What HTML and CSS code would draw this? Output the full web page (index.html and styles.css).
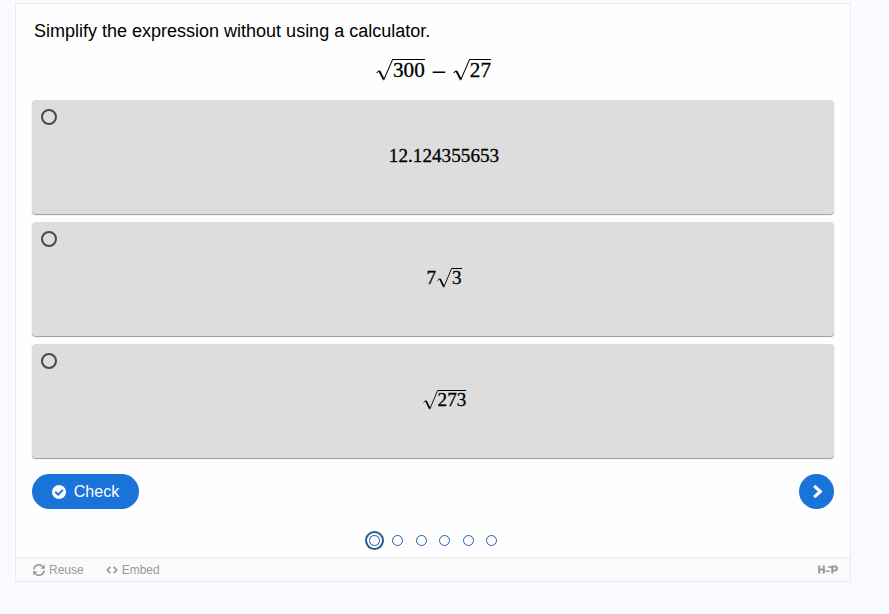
FILE: index.html
```html
<!DOCTYPE html>
<html lang="en">

<head>
    <meta charset="UTF-8">
    <meta name="viewport" content="width=device-width, initial-scale=1.0">
    <title>Simplify the expression</title>
    <link rel="stylesheet" href="styles.css">
</head>

<body>
    <div class="quiz">
        <div class="question">
            <p class="intro">Simplify the expression without using a calculator.</p>
            <div class="math expression">
                <span class="sqrt"><svg viewBox="0 0 17 21" preserveAspectRatio="none"><path class="thin" d="M.6 13.3 3.3 11M7.6 20.3 16.6.5H17"/><path class="thick" d="M3.4 11.4 7.6 19.4"/></svg><span class="radicand">300</span></span>
                <span class="minus">−</span>
                <span class="sqrt"><svg viewBox="0 0 17 21" preserveAspectRatio="none"><path class="thin" d="M.6 13.3 3.3 11M7.6 20.3 16.6.5H17"/><path class="thick" d="M3.4 11.4 7.6 19.4"/></svg><span class="radicand">27</span></span>
            </div>
            <ul class="answers">
                <li class="answer">
                    <span class="radio"></span>
                    <div class="math">12.124355653</div>
                </li>
                <li class="answer">
                    <span class="radio"></span>
                    <div class="math">7<span class="sqrt"><svg viewBox="0 0 17 21" preserveAspectRatio="none"><path class="thin" d="M.6 13.3 3.3 11M7.6 20.3 16.6.5H17"/><path class="thick" d="M3.4 11.4 7.6 19.4"/></svg><span class="radicand">3</span></span></div>
                </li>
                <li class="answer">
                    <span class="radio"></span>
                    <div class="math"><span class="sqrt"><svg viewBox="0 0 17 21" preserveAspectRatio="none"><path class="thin" d="M.6 13.3 3.3 11M7.6 20.3 16.6.5H17"/><path class="thick" d="M3.4 11.4 7.6 19.4"/></svg><span class="radicand">273</span></span></div>
                </li>
            </ul>
            <div class="buttons">
                <button class="check">
                    <svg width="14" height="14" viewBox="0 0 14 14"><circle cx="7" cy="7" r="7" fill="#fff"/><path d="M3.2 6.7 6.2 9.6 10.9 4.9" fill="none" stroke="#1a73d9" stroke-width="2"/></svg>
                    Check
                </button>
                <button class="next" aria-label="Next">
                    <svg width="12" height="16" viewBox="0 0 12 16"><path d="M2.2 1.8 8.3 7.5 2.2 13.2" fill="none" stroke="#fff" stroke-width="3.2"/></svg>
                </button>
            </div>
        </div>
        <div class="dots">
            <span class="dot current"></span>
            <span class="dot"></span>
            <span class="dot"></span>
            <span class="dot"></span>
            <span class="dot"></span>
            <span class="dot"></span>
        </div>
        <div class="actions">
            <span class="action reuse">
                <svg width="12" height="12" viewBox="0 0 12 12"><path d="M.9 5.3A5 5 0 0 1 9.7 2.6M11.1 6.7A5 5 0 0 1 2.3 9.4" fill="none" stroke="#999" stroke-width="1.6"/><path d="M11.8.6V4.8H7.6ZM.2 11.4V7.2H4.4Z" fill="#999"/></svg>
                Reuse
            </span>
            <span class="action embed">
                <svg width="12" height="8" viewBox="0 0 12 8"><path d="M4.4.9 1.2 4 4.4 7.1M7.6.9 10.8 4 7.6 7.1" fill="none" stroke="#999" stroke-width="1.6"/></svg>
                Embed
            </span>
            <svg class="logo" width="20" height="9" viewBox="0 0 20 9"><path d="M1.2.5V8.5M5.8.5V8.5M1.2 4.5H6M14.3 8.5V1.5H17A1.9 1.9 0 0 1 17 5.4H14.5" fill="none" stroke="#999" stroke-width="2"/><path d="M10 2H14M7.5 6.3H11.5" fill="none" stroke="#999" stroke-width="1.4"/></svg>
        </div>
    </div>
</body>

</html>
```
FILE: styles.css
```css
* {
    box-sizing: border-box;
}

body {
    margin: 0;
    padding: 3px 0 0 15px;
    background: #fafaff;
    font-family: "Liberation Sans", Arial, sans-serif;
}

.quiz {
    width: 836px;
    height: 579px;
    border: 1px solid #ececf0;
    background: #fefefe;
}

.question {
    height: 520px;
    padding: 16px 16px 0;
}

.intro {
    margin: 0;
    padding-left: 2px;
    font-size: 18px;
    line-height: 22px;
    color: #000;
}

.math {
    display: flex;
    align-items: center;
    justify-content: center;
    font-family: "Liberation Serif", serif;
    font-size: 19.2px;
    line-height: 20px;
    color: #000;
    -webkit-text-stroke: 0.3px #000;
}

.sqrt {
    display: flex;
    align-items: flex-start;
}

.sqrt svg {
    width: 15px;
    height: 20px;
    margin-left: 1px;
    fill: none;
    stroke: #000;
}

.sqrt .thin {
    stroke-width: 1;
}

.sqrt .thick {
    stroke-width: 1.9;
}

.radicand {
    height: 20px;
    border-top: 1px solid #000;
    line-height: 18px;
}

.expression {
    height: 54px;
    padding: 2px 0 0 1px;
    font-size: 21.2px;
}

.expression .sqrt svg {
    width: 17px;
    height: 22px;
    margin-left: 0;
}

.expression .radicand {
    height: 22px;
    line-height: 20px;
}

.minus {
    width: 28px;
    padding-top: 3px;
    font-size: 27px;
    text-align: center;
    -webkit-text-stroke: 0;
}

.answers {
    margin: 4px 0 0;
    padding: 0;
    list-style: none;
}

.answer {
    display: flex;
    height: 114px;
    margin-bottom: 8px;
    padding: 9px;
    border-radius: 4px;
    background: #ddd;
    box-shadow: 0 1px 1px #999;
}

.radio {
    width: 16px;
    height: 16px;
    border: 2px solid #494949;
    border-radius: 50%;
}

.answer .math {
    flex: 1;
    padding: 0 0 2px 6px;
}

.buttons {
    display: flex;
    justify-content: space-between;
    padding-top: 8px;
}

button {
    display: flex;
    align-items: center;
    justify-content: center;
    height: 35px;
    padding: 0;
    border: none;
    border-radius: 18px;
    background: #1a73d9;
    color: #fff;
    font: 16px "Liberation Sans", Arial, sans-serif;
}

.check {
    gap: 8px;
    width: 107px;
}

.next {
    width: 35px;
}

.next svg {
    margin-left: 3px;
}

.dots {
    display: flex;
    align-items: center;
    justify-content: center;
    gap: 12.5px;
    height: 33px;
}

.dot {
    width: 11px;
    height: 11px;
    border: 1px solid #1f61ad;
    border-radius: 50%;
}

.current {
    box-shadow: 0 0 0 2px #fefefe, 0 0 0 4px #2d5a94;
}

.actions {
    display: flex;
    align-items: center;
    height: 24px;
    padding: 0 12px 0 17px;
    border-top: 1px solid #ececf0;
    background: #fafafa;
    color: #999;
    font-size: 12px;
}

.action {
    display: flex;
    align-items: center;
    gap: 4px;
    margin-right: 22px;
}

.logo {
    margin-left: auto;
}
```
